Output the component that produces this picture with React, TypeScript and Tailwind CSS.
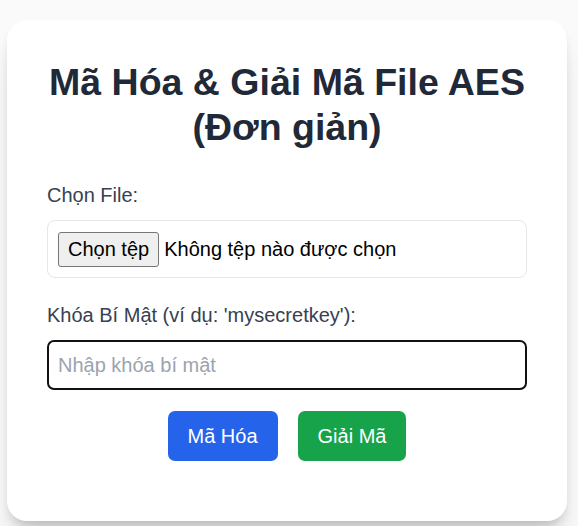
import React, { useState } from "react";

const App = () => {
  const [key, setKey] = useState("");

  return (
    <div className="min-h-[526px] bg-[#fafafa] pt-[20px] pl-[7px] font-['Liberation_Sans',Arial,sans-serif]">
      <div className="w-[560px] rounded-[20px] bg-white px-[40px] pt-[40px] pb-[60px] shadow-[0_25px_31px_-6px_rgba(0,0,0,0.12),0_10px_12px_-7px_rgba(0,0,0,0.12),0_6px_8px_rgba(0,0,0,0.06)]">
        <h1 className="mb-[30px] text-center text-[37.5px] leading-[45px] font-bold text-[#1f2937]">
          Mã Hóa &amp; Giải Mã File AES (Đơn giản)
        </h1>

        <label className="mb-[10px] block text-[20px] leading-[30px] text-[#374151]">
          Chọn File:
        </label>
        <div className="mb-[20px] flex h-[58px] items-center gap-[5px] rounded-[8px] border border-[#e5e7eb] px-[10px]">
          <span className="flex h-[35px] items-center rounded-[3px] border border-[#767676] bg-[#efefef] px-[9px] text-[20px] text-black">
            Chọn tệp
          </span>
          <span className="text-[20px] text-black">Không tệp nào được chọn</span>
        </div>

        <label className="mb-[10px] block pt-[2px] text-[20px] leading-[30px] text-[#374151]">
          Khóa Bí Mật (ví dụ: 'mysecretkey'):
        </label>
        <input
          type="text"
          value={key}
          onChange={(e) => setKey(e.target.value)}
          placeholder="Nhập khóa bí mật"
          className="block h-[50px] w-full rounded-[7px] border-2 border-[#111] px-[9px] text-[20px] text-black outline-none placeholder:text-[#9ca3af]"
        />

        <div className="mt-[21px] flex justify-center gap-[20px]">
          <button className="h-[50px] rounded-[7px] bg-[#2563eb] px-[20px] text-[20px] text-white">
            Mã Hóa
          </button>
          <button className="h-[50px] rounded-[7px] bg-[#16a34a] px-[20px] text-[20px] text-white">
            Giải Mã
          </button>
        </div>
      </div>
    </div>
  );
};

export default App;
